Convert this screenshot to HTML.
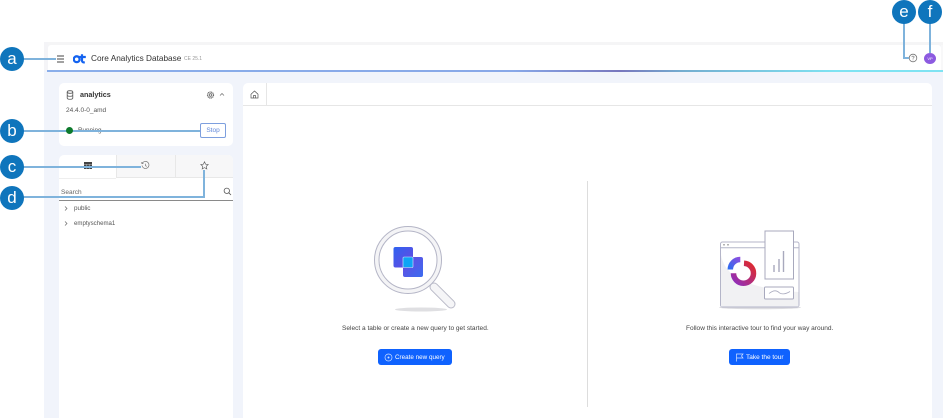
<!DOCTYPE html>
<html><head><meta charset="utf-8"><style>
*{box-sizing:border-box}
html,body{margin:0;padding:0;width:943px;height:418px;overflow:hidden;background:#fff;font-family:"Liberation Sans",sans-serif;color:#3d3d3d}
#w{position:absolute;left:0;top:0;width:943px;height:418px;overflow:hidden;filter:blur(.3px)}
.a{position:absolute}
.t{position:absolute;white-space:nowrap;line-height:1}
.badge{position:absolute;width:24px;height:24px;border-radius:50%;background:#0f75bc;color:#fff;font-size:17px;line-height:23px;text-align:center}
.ln{position:absolute;background:#7fb3dc}
.btn{position:absolute;background:#0f62fe;border-radius:3px;color:#fff;font-size:6.3px;line-height:16px;height:16px;white-space:nowrap}
</style></head><body><div id="w">
<div class="a" style="left:44px;top:42px;width:899px;height:376px;background:#f1f4fb"></div>
<div class="a" style="left:44px;top:42px;width:899px;height:4px;background:#f5f5f6"></div>
<div class="a" style="left:44px;top:42px;width:4px;height:29px;background:#f4f4f7"></div>
<div class="a" style="left:48px;top:45px;width:893px;height:25px;background:#fff;border-radius:3px 3px 0 0"></div>
<div class="a" style="left:941px;top:45px;width:2px;height:25px;background:#f8f8f9"></div>
<div class="a" style="left:47px;top:70px;width:896px;height:2px;background:linear-gradient(90deg,#8aaeea 0%,#88a8e8 52%,#7877bd 64%,#74aed0 71%,#7fe3f2 88%,#7fe3f2 100%)"></div>

<svg class="a" style="left:56px;top:55px" width="9" height="8" viewBox="0 0 9 8"><path d="M1 1h7M1 4h7M1 7h7" stroke="#444" stroke-width="1" fill="none"/></svg>
<svg class="a" style="left:73px;top:54px" width="13" height="10" viewBox="0 0 13 10"><circle cx="3.7" cy="5.200" r="2.900" fill="none" stroke="#1463f0" stroke-width="2.300"/><path d="M9 .3V6.600c0 1.400.9 1.900 2.800 1.700M6.200 3H12.800" stroke="#1463f0" stroke-width="2.200" fill="none"/></svg>
<div class="t" style="left:91px;top:54.800px;font-size:8.250px;color:#333">Core Analytics Database</div>
<div class="t" style="left:184px;top:56.500px;font-size:5px;color:#999">CE 25.1</div>

<svg class="a" style="left:908px;top:53px" width="10" height="10" viewBox="0 0 10 10"><circle cx="5" cy="5" r="3.800" fill="none" stroke="#777" stroke-width=".8"/><path d="M3.900 4.100c0-1.400 2.200-1.400 2.200 0 0 .8-1.100.8-1.100 1.600M5 6.500v.8" stroke="#777" stroke-width=".7" fill="none"/></svg>
<div class="a" style="left:924px;top:52.500px;width:12px;height:11px;border-radius:50%;background:#8c5ae0;color:#fff;font-size:4px;line-height:11px;text-align:center">VP</div>

<!-- analytics card -->
<div class="a" style="left:59px;top:83px;width:174px;height:63px;background:#fff;border-radius:5px"></div>
<svg class="a" style="left:66px;top:90px" width="8" height="10" viewBox="0 0 8 10"><ellipse cx="4" cy="2" rx="2.800" ry="1.300" fill="none" stroke="#555" stroke-width=".8"/><path d="M1.200 2v6c0 1.700 5.600 1.700 5.600 0V2M1.200 5c0 1.700 5.600 1.700 5.600 0" fill="none" stroke="#555" stroke-width=".8"/></svg>
<div class="t" style="left:80px;top:90.800px;font-size:7.200px;font-weight:bold;color:#333">analytics</div>
<svg class="a" style="left:206px;top:90px" width="9" height="10" viewBox="0 0 9 10"><circle cx="4.500" cy="5" r="1.300" fill="none" stroke="#666" stroke-width=".8"/><circle cx="4.500" cy="5" r="3" fill="none" stroke="#666" stroke-width="1.200" stroke-dasharray="1.100 .5"/></svg>
<svg class="a" style="left:219px;top:92px" width="6" height="5" viewBox="0 0 6 5"><path d="M1 3.500L3 1.500 5 3.500" fill="none" stroke="#666" stroke-width=".7"/></svg>
<div class="t" style="left:66px;top:107.500px;font-size:6.500px;color:#555">24.4.0-0_amd</div>
<div class="t" style="left:78px;top:127.800px;font-size:6.300px;color:#555">Running</div>
<div class="a" style="left:200px;top:123px;width:26px;height:15px;border:1px solid #7d9fde;border-radius:2px;background:#fff;color:#5f86d8;font-size:6.500px;line-height:13px;text-align:center">Stop</div>

<!-- left panel -->
<div class="a" style="left:59px;top:155px;width:174px;height:263px;background:#fff;border-radius:5px 5px 0 0"></div>
<div class="a" style="left:116px;top:155px;width:117px;height:23px;background:#f7f7f8;border-radius:0 5px 0 0;border-left:1px solid #e8e8e8;border-bottom:1px solid #e8e8e8"></div>
<div class="a" style="left:175px;top:155px;width:1px;height:23px;background:#e8e8e8"></div>
<div class="a" style="left:59px;top:178px;width:57px;height:1px;background:#eee"></div>
<svg class="a" style="left:84px;top:162px" width="8" height="7" viewBox="0 0 8 7"><rect width="8" height="7" fill="#444"/><path d="M0 2.500h8M0 4.700h8M2.700 2v5M5.300 2v5" stroke="#bbb" stroke-width=".5"/></svg>
<svg class="a" style="left:141px;top:161px" width="9" height="9" viewBox="0 0 9 9"><path d="M1.400 2.200A3.500 3.500 0 1 1 1 4.500M.8 1v1.500h1.600M4.500 2.800v1.900l1.200.7" fill="none" stroke="#777" stroke-width=".7"/></svg>
<svg class="a" style="left:200px;top:161px" width="9" height="9" viewBox="0 0 9 9"><path d="M4.500.8l1.100 2.400 2.600.3-1.900 1.800.5 2.600-2.300-1.300-2.300 1.300.5-2.600L.8 3.500l2.600-.3z" fill="none" stroke="#666" stroke-width=".7"/></svg>
<div class="t" style="left:61px;top:189.500px;font-size:6.500px;color:#666">Search</div>
<svg class="a" style="left:223px;top:187px" width="9" height="9" viewBox="0 0 9 9"><circle cx="3.800" cy="3.800" r="2.700" fill="none" stroke="#555" stroke-width=".8"/><path d="M5.800 5.800L8 8" stroke="#555" stroke-width=".8"/></svg>
<div class="a" style="left:59px;top:200px;width:174px;height:1.400px;background:#8a8a8a"></div>
<svg class="a" style="left:64px;top:206px" width="4" height="5" viewBox="0 0 4 5"><path d="M1 .5L3 2.500 1 4.500" fill="none" stroke="#666" stroke-width=".7"/></svg>
<div class="t" style="left:74px;top:205.500px;font-size:6.300px;color:#555">public</div>
<svg class="a" style="left:64px;top:221px" width="4" height="5" viewBox="0 0 4 5"><path d="M1 .5L3 2.500 1 4.500" fill="none" stroke="#666" stroke-width=".7"/></svg>
<div class="t" style="left:74px;top:220.500px;font-size:6.100px;color:#555">emptyschema1</div>

<!-- main panel -->
<div class="a" style="left:243px;top:83px;width:689px;height:335px;background:#fff;border-radius:5px 5px 0 0"></div>
<div class="a" style="left:243px;top:105px;width:689px;height:1px;background:#e6e6e6"></div>
<div class="a" style="left:266px;top:83px;width:1px;height:22px;background:#e6e6e6"></div>
<svg class="a" style="left:250px;top:90px" width="9" height="9" viewBox="0 0 9 9"><path d="M1 4.200L4.500 1 8 4.200V8H1zM3.500 8V5.500h2V8" fill="none" stroke="#555" stroke-width=".7"/></svg>
<div class="a" style="left:587px;top:181px;width:1px;height:226px;background:#ddd"></div>

<!-- magnifier -->
<svg class="a" style="left:370px;top:225px" width="92" height="92" viewBox="0 0 92 92">
<defs><linearGradient id="g1" x1="0" y1="0" x2="1" y2="1"><stop offset="0" stop-color="#2f62f0"/><stop offset="1" stop-color="#6a49e0"/></linearGradient><linearGradient id="g2" x1="0" y1="0" x2="1" y2="1"><stop offset="0" stop-color="#6a49e0"/><stop offset="1" stop-color="#3a6cf0"/></linearGradient></defs>
<ellipse cx="51" cy="84.500" rx="26" ry="2" fill="#dfdfe2"/>
<path d="M64 62L81 79" stroke="#b9bac8" stroke-width="9" stroke-linecap="round"/>
<path d="M64 62L81 79" stroke="#f5f5f7" stroke-width="7" stroke-linecap="round"/>
<circle cx="38" cy="35" r="33.500" fill="#f4f4f6" stroke="#b4b5c6" stroke-width="1"/>
<circle cx="38" cy="35" r="29" fill="#fff" stroke="#b4b5c6" stroke-width="1"/>
<rect x="23.500" y="22" width="19.500" height="20.500" rx="2" fill="url(#g1)"/>
<rect x="33" y="32" width="20" height="20" rx="2" fill="url(#g2)"/>
<rect x="33" y="32" width="10" height="10.500" rx="1" fill="#0ea5f5" stroke="#dfe6fa" stroke-width=".6"/>
</svg>
<div class="t" style="left:342px;top:325.800px;font-size:6.550px;color:#444">Select a table or create a new query to get started.</div>
<div class="btn" style="left:378px;top:349px;width:74px"><svg class="a" style="left:6px;top:3.500px" width="9" height="9" viewBox="0 0 9 9"><circle cx="4.500" cy="4.500" r="3.500" fill="none" stroke="#cfe0ff" stroke-width=".7"/><circle cx="4.500" cy="4.500" r="1" fill="#cfe0ff"/></svg><span class="a" style="left:17px;top:.5px">Create new query</span></div>

<!-- tour illustration -->
<svg class="a" style="left:715px;top:228px" width="90" height="84" viewBox="0 0 90 84">
<defs><linearGradient id="g3" x1="1" y1="0" x2="0" y2="1"><stop offset="0" stop-color="#e02a2a"/><stop offset="1" stop-color="#8d2fc0"/></linearGradient><linearGradient id="g4" x1="0" y1="1" x2="1" y2="0"><stop offset="0" stop-color="#2f6cf0"/><stop offset="1" stop-color="#8a4fe0"/></linearGradient></defs>
<ellipse cx="45" cy="79.500" rx="41" ry="1.800" fill="#dcdce0"/>
<rect x="5.500" y="14" width="78.500" height="65" rx="2" fill="#fff" stroke="#b4b5c8" stroke-width="1"/>
<path d="M6 27C10 48 30 60 83.500 64V78.500H6z" fill="#f1f1f3"/>
<path d="M5.500 19.700H84" stroke="#b4b5c8" stroke-width="1"/>
<circle cx="9" cy="16.800" r=".8" fill="#888"/><circle cx="13" cy="16.800" r=".8" fill="#888"/>
<rect x="50" y="3" width="28.500" height="48" fill="#fff" stroke="#a8a9bd" stroke-width="1"/>
<rect x="49.500" y="59" width="29" height="12" rx="1" fill="#fff" stroke="#a8a9bd" stroke-width="1"/>
<path d="M54 65.500c5-4 8-3 10-1s6 2 11-1" fill="none" stroke="#a8a9bd" stroke-width=".8"/>
<path d="M59 37v7M64 31v13M68.500 23v21" stroke="#a8a9bd" stroke-width="1.400"/>
<path d="M15.300 41.500A10 10 0 0 1 25.300 31.500" fill="none" stroke="url(#g4)" stroke-width="5.500"/>
<path d="M29 35.300A10 10 0 1 1 18.500 45.300" fill="none" stroke="url(#g3)" stroke-width="5.500"/>
</svg>
<div class="t" style="left:686px;top:325.800px;font-size:6.550px;color:#444">Follow this interactive tour to find your way around.</div>
<div class="btn" style="left:729px;top:349px;width:61px"><svg class="a" style="left:6px;top:3.500px" width="9" height="9" viewBox="0 0 9 9"><path d="M1.500 8.500V1H8L6.500 3 8 5H1.500" fill="none" stroke="#d6e4ff" stroke-width=".7"/></svg><span class="a" style="left:17px;top:.5px;font-size:6.500px">Take the tour</span></div>

<!-- callouts -->
<div class="ln" style="left:20px;top:58px;width:36px;height:2px"></div>
<div class="badge" style="left:0;top:47px">a</div>
<div class="ln" style="left:20px;top:129.500px;width:180px;height:2px"></div>
<div class="a" style="left:66px;top:127px;width:7px;height:7px;border-radius:50%;background:#0d7a2c"></div>
<div class="badge" style="left:0;top:118.500px">b</div>
<div class="ln" style="left:20px;top:166px;width:121px;height:2px"></div>
<div class="badge" style="left:0;top:155px">c</div>
<div class="ln" style="left:20px;top:196px;width:185px;height:2px"></div>
<div class="ln" style="left:203px;top:170px;width:2px;height:28px"></div>
<div class="badge" style="left:0;top:186px">d</div>
<div class="ln" style="left:903px;top:20px;width:2px;height:39px"></div>
<div class="ln" style="left:903px;top:57px;width:6px;height:2px"></div>
<div class="badge" style="left:892px;top:0">e</div>
<div class="ln" style="left:929px;top:20px;width:2px;height:33px"></div>
<div class="badge" style="left:918px;top:0">f</div>
</div></body></html>
